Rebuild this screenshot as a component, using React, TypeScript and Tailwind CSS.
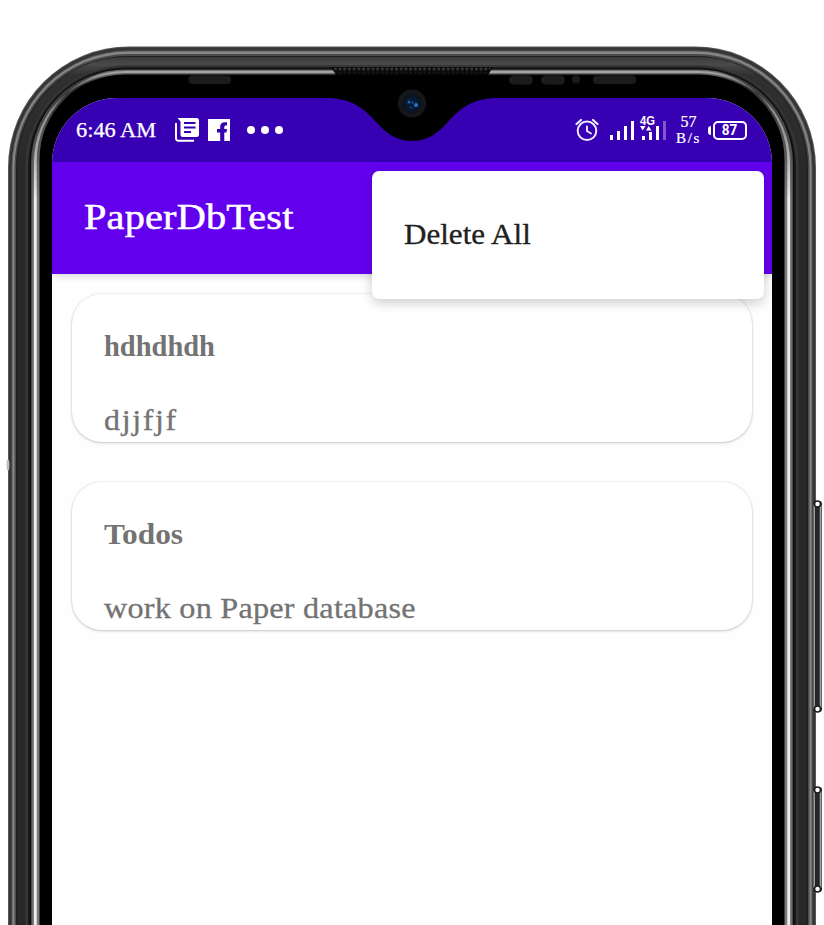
import type { ReactNode } from "react";

type Layer = { x: number; y: number; r: number; fill: string };

// Concentric metal bands of the phone body, outermost first.
const layers: Layer[] = [
  { x: 8, y: 46.5, r: 121, fill: "#555857" },
  { x: 9, y: 47.5, r: 120, fill: "#343535" },
  { x: 11.5, y: 50.5, r: 117, fill: "#5a5a5a" },
  { x: 12.5, y: 51.5, r: 116, fill: "#868686" },
  { x: 14.5, y: 54, r: 113, fill: "#4a4b4b" },
  { x: 16, y: 56, r: 111, fill: "#1c2023" },
  { x: 17.5, y: 57, r: 109, fill: "url(#band)" },
  { x: 25.5, y: 65, r: 101, fill: "#363636" },
  { x: 28, y: 67, r: 98, fill: "#1c1c1c" },
  { x: 29.5, y: 68.5, r: 96, fill: "#0d0d0d" },
  { x: 31, y: 69.5, r: 94, fill: "#4d4d4d" },
  { x: 32.3, y: 70, r: 93, fill: "url(#edge)" },
  { x: 34, y: 71, r: 91, fill: "url(#rim)" },
  { x: 36.7, y: 73, r: 88, fill: "url(#edge)" },
  { x: 39.5, y: 74.5, r: 85, fill: "#000000" },
];

const buttons = [
  { y: 501, h: 211 },
  { y: 787, h: 105 },
];

function PhoneBody() {
  return (
    <svg className="absolute inset-0" width="824" height="925" viewBox="0 0 824 925">
      <defs>
        <linearGradient id="rim" gradientUnits="userSpaceOnUse" x1="0" y1="70" x2="0" y2="200">
          <stop offset="0" stopColor="#a8a8a8" />
          <stop offset="0.05" stopColor="#999999" />
          <stop offset="0.18" stopColor="#3a3a3a" />
          <stop offset="0.3" stopColor="#8a8a8a" />
          <stop offset="0.6" stopColor="#a5a5a5" />
          <stop offset="1" stopColor="#eeeeee" />
        </linearGradient>
        <linearGradient id="edge" gradientUnits="userSpaceOnUse" x1="0" y1="70" x2="0" y2="200">
          <stop offset="0" stopColor="#777777" />
          <stop offset="0.12" stopColor="#2a2a2a" />
          <stop offset="0.3" stopColor="#3c3c3c" />
          <stop offset="1" stopColor="#7a7a7a" />
        </linearGradient>
        <linearGradient id="band" gradientUnits="userSpaceOnUse" x1="0" y1="57" x2="0" y2="180">
          <stop offset="0" stopColor="#3a3a3a" />
          <stop offset="0.06" stopColor="#4a4a4a" />
          <stop offset="0.15" stopColor="#303030" />
          <stop offset="1" stopColor="#282828" />
        </linearGradient>
        <pattern id="grille" width="4.7" height="9" patternUnits="userSpaceOnUse" x="333" y="66">
          <rect width="4.7" height="9" fill="#080808" />
          <rect x="0.9" y="1.5" width="3" height="3" rx="1" fill="#333333" />
          <rect x="1.4" y="5.5" width="2" height="2" rx="1" fill="#1c1c1c" />
        </pattern>
      </defs>
      {buttons.map((b) => (
        <g key={b.y}>
          <rect x="812" y={b.y} width="10" height={b.h} rx="3" fill="#222222" />
          <rect x="819.5" y={b.y + 4} width="2" height={b.h - 8} fill="#a5a5a5" />
        </g>
      ))}
      {layers.map((l) => (
        <rect key={l.x} x={l.x} y={l.y} width={824 - 2 * l.x} height="1100" rx={l.r} ry={l.r} fill={l.fill} />
      ))}
      {buttons.map((b) => (
        <g key={b.y}>
          <rect x="813.5" y={b.y + 4} width="1.5" height={b.h - 8} fill="#999999" />
          <rect x="815" y={b.y + 4} width="4.5" height={b.h - 8} fill="#22272a" />
          <circle cx="817.5" cy={b.y + 3} r="3" fill="#ffffff" stroke="#1a1a1a" strokeWidth="1.5" />
          <circle cx="817.5" cy={b.y + b.h - 3} r="3" fill="#ffffff" stroke="#1a1a1a" strokeWidth="1.5" />
        </g>
      ))}
      <ellipse cx="8" cy="465" rx="1.5" ry="5.5" fill="#bbbbbb" />
      <path d="M331 67H493L488 75H336Z" fill="#080808" />
      <path d="M333 67H491L488 75H336Z" fill="url(#grille)" />
      <g fill="#1b1b1b">
        <rect x="188.5" y="75.5" width="42.5" height="8.5" rx="4" />
        <rect x="509" y="75.5" width="24" height="9" rx="4.5" />
        <rect x="541" y="75.5" width="24" height="9" rx="4.5" />
        <circle cx="576" cy="79.5" r="4" />
        <rect x="593" y="75.5" width="43" height="8.5" rx="4" />
      </g>
    </svg>
  );
}

function Notch() {
  return (
    <svg className="absolute left-[320px] top-[85px]" width="184" height="60" viewBox="320 85 184 60">
      <path
        d="M326 97.5V98C350 98 363 107 377 123C388 135.5 399 141 412 141C425 141 436 135.5 447 123C461 107 474 98 498 98V97.5Z"
        fill="#000000"
      />
      <circle cx="412" cy="103.5" r="14" fill="#15171a" />
      <circle cx="412" cy="103.5" r="10" fill="#0c1420" />
      <circle cx="412" cy="103.5" r="7" fill="#071a36" />
      <circle cx="409" cy="102" r="1.5" fill="#1c64b0" />
      <circle cx="412.5" cy="102.5" r="1" fill="#1c64b0" />
      <circle cx="416" cy="105" r="2" fill="#2377c8" />
      <circle cx="411" cy="107.5" r="1" fill="#154c8c" />
    </svg>
  );
}

function NewsIcon() {
  return (
    <svg width="24" height="24" viewBox="0 0 24 24">
      <path d="M2.5 0H21.5A2.5 2.5 0 0 1 24 2.5V16.5A2.5 2.5 0 0 1 21.5 19H8A2.500 2.500 0 0 1 5.5 16.5V3.5Z" fill="#fff" />
      <path d="M1 5V20.5A2.300 2.300 0 0 0 3.300 22.800H19" fill="none" stroke="#fff" strokeWidth="2" />
      <path d="M9 5H20.5M9 9.500H20.5M9 14H16" stroke="#3700b3" strokeWidth="2" />
    </svg>
  );
}

function FacebookIcon() {
  return (
    <svg width="22" height="22" viewBox="0 0 22 22">
      <path d="M0 0H22V22H16.300V13.500H18.500L19 10H16.300V8C16.300 6.900 16.800 6.400 17.800 6.400H19V3.200H16.800C13.800 3.200 12.200 4.900 12.200 7.500V10H9V13.500H12.200V22H0Z" fill="#fff" />
    </svg>
  );
}

function AlarmIcon() {
  return (
    <svg width="24" height="24" viewBox="0 0 24 24" fill="none" stroke="#eeeaff" strokeLinecap="round">
      <circle cx="12" cy="12.8" r="9.3" strokeWidth="2" />
      <path d="M12 8.500V13L16 15.500" strokeWidth="1.9" />
      <path d="M1.500 6L6 2M22.500 6L18 2" strokeWidth="2.2" />
    </svg>
  );
}

function Signals() {
  return (
    <svg width="56" height="26" viewBox="610 115 56 26" fill="#fff">
      <rect x="610" y="135" width="3" height="5" />
      <rect x="617" y="131" width="3" height="9" />
      <rect x="624" y="126" width="3" height="14" />
      <rect x="631" y="121" width="3" height="19" />
      <rect x="642" y="136" width="3" height="4" />
      <rect x="649" y="132" width="3" height="8" />
      <rect x="656" y="126" width="3" height="14" />
      <rect x="663" y="121" width="3" height="19" opacity="0.35" />
      <path d="M640 126H645.500L642.700 130.500ZM646 130.500H651.500L648.700 126Z" />
      <text x="640" y="125" textLength="15" lengthAdjust="spacingAndGlyphs" className="font-['Liberation_Sans'] text-[12.5px] font-bold">4G</text>
    </svg>
  );
}

function StatusBar() {
  return (
    <div className="flex h-16 items-center bg-[#3700b3] pl-6 pr-[25px] text-white">
      <div className="w-[99px] text-[20.5px] leading-6">
        <span className="inline-block origin-left scale-x-[1.09] whitespace-nowrap [-webkit-text-stroke:0.25px_white]">6:46 AM</span>
      </div>
      <div className="flex items-center gap-[9px]">
        <NewsIcon />
        <FacebookIcon />
      </div>
      <div className="ml-[17px] flex gap-[6px]">
        <i className="size-2 rounded-full bg-white" />
        <i className="size-2 rounded-full bg-white" />
        <i className="size-2 rounded-full bg-white" />
      </div>
      <div className="ml-auto flex items-center">
        <AlarmIcon />
        <div className="-mt-1 ml-[11px] flex"><Signals /></div>
        <div className="ml-[9px] flex w-[27px] flex-col items-center text-[15px] leading-4 [-webkit-text-stroke:0.2px_white]">
          <span className="text-[16px]">57</span>
          <span className="tracking-[1.6px]">B/s</span>
        </div>
        <i className="ml-[6px] h-[9px] w-[3px] rounded-l-sm bg-white" />
        <div className="ml-[2px] flex h-[19px] w-[34px] items-center justify-center rounded-[5px] border-2 border-white font-['Roboto',sans-serif] text-[15px] font-bold leading-none">
          <span className="inline-block scale-x-90">87</span>
        </div>
      </div>
    </div>
  );
}

function Card({ title, children }: { title: ReactNode; children: ReactNode }) {
  return (
    <article className="h-[148px] rounded-[30px] bg-white px-8 pt-9 text-[#737373] shadow-[0_1px_3px_rgba(0,0,0,0.2),0_0_2px_rgba(0,0,0,0.12)]">
      <h2 className="h-[74px] text-[28.5px] font-bold leading-[34px]">{title}</h2>
      <p className="text-[28.5px] leading-[34px] [-webkit-text-stroke:0.3px_#737373]">{children}</p>
    </article>
  );
}

export default function App() {
  return (
    <div className="relative h-[925px] w-[824px] overflow-hidden bg-white pl-[52px] pt-[98px] font-['Liberation_Serif',serif]">
      <PhoneBody />
      <main className="relative h-[827px] w-[720px] overflow-hidden rounded-t-[65px] bg-[#fefefe]">
        <StatusBar />
        <header className="h-28 bg-[#6200ee] pl-8 pt-[34px] shadow-[0_2px_8px_rgba(0,0,0,0.16)]">
          <h1 className="inline-block origin-left scale-x-[1.12] text-[36px] leading-[42px] tracking-[0.15px] text-white [-webkit-text-stroke:0.5px_white]">PaperDbTest</h1>
        </header>
        <section className="flex flex-col gap-10 px-5 pt-5">
          <Card title="hdhdhdh">
            <span className="inline-block origin-left scale-x-[1.12] tracking-[1.5px]">djjfjf</span>
          </Card>
          <Card title={<span className="inline-block origin-left scale-x-[1.1]">Todos</span>}>
            <span className="inline-block origin-left scale-x-[1.13] whitespace-nowrap tracking-[0.2px]">work on Paper database</span>
          </Card>
        </section>
        <div className="absolute left-[320px] top-[73px] h-32 w-[392px] rounded-[7px] bg-white pl-8 pt-12 text-[28.5px] leading-8 text-[#212121] shadow-[0_4px_12px_rgba(0,0,0,0.2)]">
          <span className="inline-block origin-left scale-x-[1.09] [-webkit-text-stroke:0.3px_#212121]">Delete All</span>
        </div>
      </main>
      <Notch />
    </div>
  );
}
